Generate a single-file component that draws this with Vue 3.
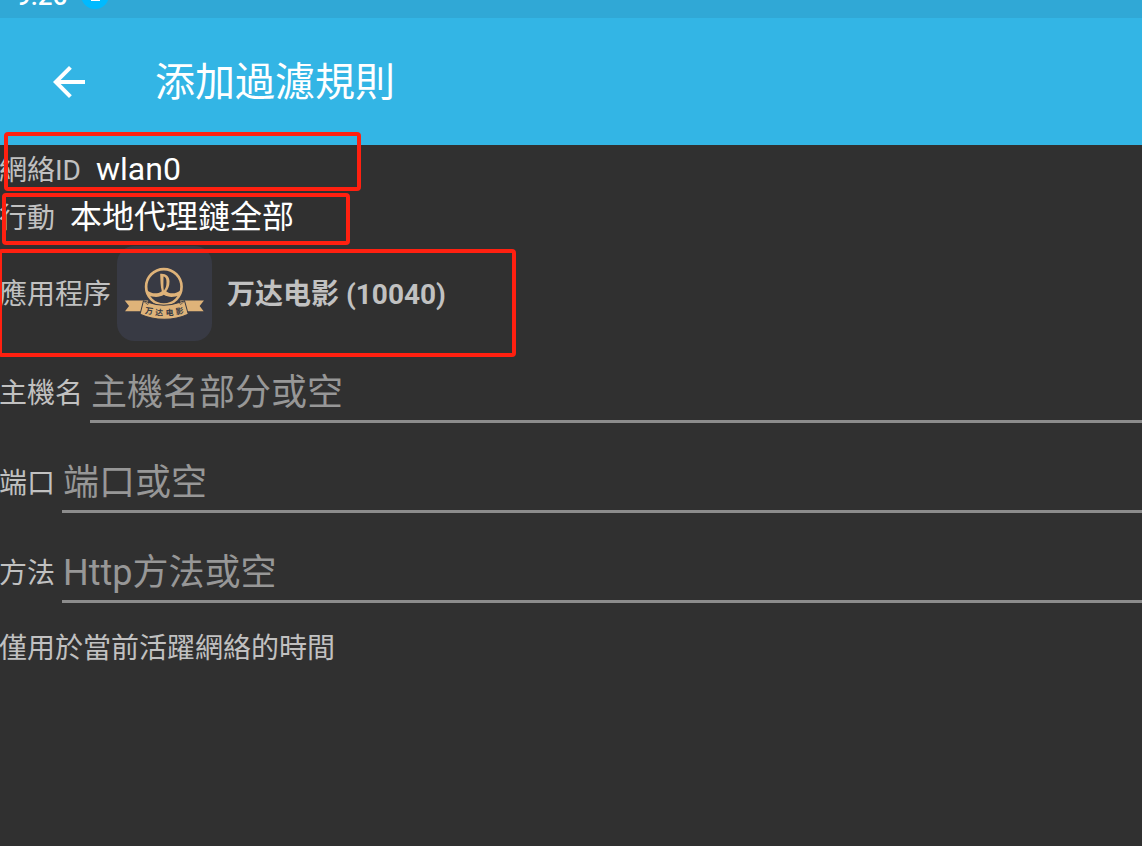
<script setup>
import { ref } from 'vue'

const network = ref('wlan0')
const action = ref('本地代理鏈全部')
const fields = ref([
  { id: 'host', label: '主機名', hint: '主機名部分或空', value: '' },
  { id: 'port', label: '端口', hint: '端口或空', value: '' },
  { id: 'method', label: '方法', hint: 'Http方法或空', value: '' },
])
</script>

<template>
  <div class="page">
    <div class="status">
      <span class="time">9:26</span>
      <span class="badge"><i></i></span>
    </div>
    <header class="bar">
      <button class="back" type="button" aria-label="返回">
        <svg viewBox="0 0 24 24" width="48" height="48" fill="#fff">
          <path d="M20 11H7.83l5.59-5.59L12 4l-8 8 8 8 1.41-1.41L7.83 13H20v-2z" />
        </svg>
      </button>
      <h1>添加過濾規則</h1>
    </header>

    <main class="form">
      <div class="row">
        <label for="network">網絡ID</label>
        <select id="network" v-model="network">
          <option>wlan0</option>
        </select>
        <span class="mark mark-network"></span>
      </div>
      <div class="row">
        <label for="action">行動</label>
        <select id="action" v-model="action">
          <option>本地代理鏈全部</option>
        </select>
        <span class="mark mark-action"></span>
      </div>
      <div class="row app">
        <span class="label">應用程序</span>
        <svg class="logo" viewBox="51 18 284 284" width="95" height="95">
          <rect x="51" y="18" width="284" height="284" rx="52" fill="#383a44" />
          <g fill="#dfb379">
            <path d="M74 181H144V213H75L87 197Z" />
            <path d="M311 181H240V213H310L298 197Z" />
          </g>
          <circle cx="191" cy="140" r="53" fill="#383a44" stroke="#dfb379" stroke-width="8" />
          <path
            d="M140 150C154 161 171 163 185 153C181 140 181 122 180 101C196 99 208 108 208 124C208 139 203 148 198 153C211 163 228 161 242 150L238 165C222 172 204 172 191 164C178 172 160 172 144 165Z"
            fill="#dfb379"
          />
          <path d="M190 109C198 111 199 118 199 126C199 138 196 145 191 151C189 141 190 126 190 109Z" fill="#383a44" />
          <path
            d="M130 182L146 187C174 197 208 197 237 187L253 182L264 222C220 242 165 242 120 222Z"
            fill="#dfb379"
            stroke="#383a44"
            stroke-width="3"
          />
          <path d="M130 183L143 193L146 187M253 183L241 193L237 187" fill="none" stroke="#383a44" stroke-width="2" />
          <g class="logo-text" fill="#383a44" text-anchor="middle">
            <text x="147" y="221" transform="rotate(8 147 214)">万</text>
            <text x="177" y="226" transform="rotate(3 177 218)">达</text>
            <text x="208" y="226" transform="rotate(-3 208 218)">电</text>
            <text x="238" y="221" transform="rotate(-8 238 214)">影</text>
          </g>
        </svg>
        <strong>万达电影 (10040)</strong>
        <span class="mark mark-app"></span>
      </div>

      <div v-for="f in fields" :key="f.id" class="field">
        <label :for="f.id">{{ f.label }}</label>
        <input :id="f.id" v-model="f.value" type="text" :placeholder="f.hint" />
      </div>
      <p class="note">僅用於當前活躍網絡的時間</p>
    </main>
  </div>
</template>

<style>
body {
  margin: 0;
  background: #303030;
}
</style>

<style scoped>
.page {
  min-height: 100vh;
  overflow: hidden;
  background: #303030;
  color: #c1c1c1;
  font-family: Roboto, 'Noto Sans CJK SC', sans-serif;
  font-size: 28px;
}
.status {
  display: flex;
  align-items: flex-end;
  gap: 14px;
  box-sizing: border-box;
  height: 18px;
  padding: 0 16px 9px;
  overflow: hidden;
  background: #30a8d6;
  color: #fff;
}
.time {
  font-size: 26px;
  line-height: 26px;
  font-weight: 500;
}
.badge {
  display: flex;
  align-items: center;
  justify-content: center;
  width: 28px;
  height: 28px;
  border-radius: 50%;
  background: #00baff;
}
.badge i {
  width: 9px;
  height: 12px;
  background: #fff;
}
.bar {
  display: flex;
  align-items: center;
  gap: 62px;
  height: 127px;
  padding-left: 45px;
  background: #33b5e5;
}
.back {
  display: flex;
  padding: 0;
  border: 0;
  background: none;
}
h1 {
  margin: 0;
  padding-bottom: 6px;
  color: #fff;
  font-size: 40px;
  font-weight: 400;
}
.row {
  position: relative;
  display: flex;
  align-items: center;
  gap: 15px;
  height: 48px;
}
label,
.label,
strong {
  flex: none;
  padding-bottom: 3px;
}
label,
.label {
  margin-left: -1px;
}
select {
  appearance: none;
  padding: 0;
  border: 0;
  background: none;
  color: #fff;
  font: inherit;
  font-size: 32px;
}
.app {
  height: 95px;
  margin: 5px 0 20px;
}
.app .label {
  margin-right: -9px;
}
.logo {
  flex: none;
}
.logo-text {
  font-size: 24px;
  font-weight: 700;
}
strong {
  font-weight: 700;
}
.mark {
  position: absolute;
  box-sizing: border-box;
  border: 4px solid #ff2010;
  border-radius: 4px;
  pointer-events: none;
}
.mark-network {
  top: -13px;
  left: 4px;
  width: 357px;
  height: 59px;
}
.mark-action {
  top: 0;
  left: 2px;
  width: 348px;
  height: 52px;
}
.mark-app {
  top: 3px;
  left: -2px;
  width: 518px;
  height: 108px;
}
.field {
  display: flex;
  align-items: center;
  gap: 7px;
  height: 62px;
  margin-bottom: 28px;
}
input {
  flex: 1;
  min-width: 0;
  box-sizing: border-box;
  height: 62px;
  padding: 4px 1px 0;
  border: 0;
  border-bottom: 3px solid #8c8c8c;
  border-radius: 0;
  outline: 0;
  background: none;
  color: #fff;
  font: inherit;
  font-size: 36px;
}
input::placeholder {
  color: #979797;
  opacity: 1;
}
.note {
  margin: -2px 0 0 -1px;
  line-height: 40px;
}
</style>
